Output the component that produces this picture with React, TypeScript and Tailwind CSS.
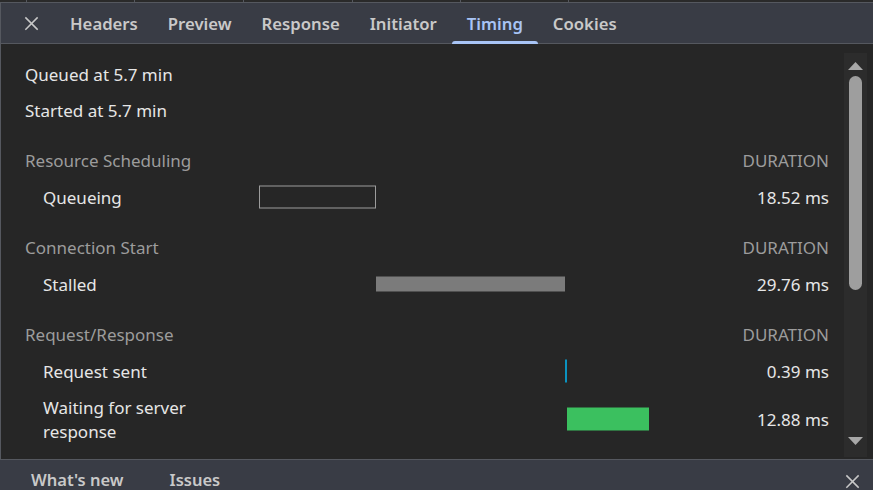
import React from "react";

const font = { fontFamily: '"Noto Sans", "Open Sans", sans-serif' };

function XIcon({ className }: { className?: string }) {
  return (
    <svg className={className} viewBox="0 0 16 16" fill="none" stroke="currentColor" strokeWidth="1.6" strokeLinecap="square">
      <path d="M2 2 L14 14 M14 2 L2 14" />
    </svg>
  );
}

type Bar = { left: number; width: number; h: number; kind: "outline" | "gray" | "blue" | "green" };

function Row({ label, duration, bar, tall }: { label: React.ReactNode; duration: string; bar: Bar; tall?: boolean }) {
  const cls =
    bar.kind === "outline"
      ? "border border-[#9c9c9c]"
      : bar.kind === "gray"
      ? "bg-[#7b7b7b]"
      : bar.kind === "blue"
      ? "bg-[#0b93c0]"
      : "bg-[#3bc05f]";
  return (
    <div className={`flex items-center ${tall ? "h-[60px]" : "h-[37px]"}`}>
      <div className="w-[234px] pl-[18px] leading-[24px] text-[#e6e6e6]">{label}</div>
      <div className="relative flex-1 self-stretch flex items-center">
        <div
          className={`absolute ${cls}`}
          style={{ left: bar.left, width: bar.width, height: bar.h, top: "50%", transform: "translateY(calc(-50% - 1px))" }}
        />
      </div>
      <div className="w-[120px] text-right text-[#e6e6e6]">{duration}</div>
    </div>
  );
}

function Section({ title, children }: { title: string; children: React.ReactNode }) {
  return (
    <div className="mt-[14px]">
      <div className="flex items-center justify-between h-[36px] text-[#9c9c9c]">
        <span>{title}</span>
        <span>DURATION</span>
      </div>
      {children}
    </div>
  );
}

export default function App() {
  const tabs = ["Headers", "Preview", "Response", "Initiator", "Timing", "Cookies"];
  const dividers = [26, 134, 243, 352, 460, 568];
  return (
    <div style={font} className="w-[873px] h-[490px] bg-[#262626] flex flex-col overflow-hidden text-[17px]">
      {/* top strip */}
      <div className="h-[3px] bg-[#2a2a2a] border-b border-[#55585f] relative shrink-0">
        {dividers.map((x) => (
          <div key={x} className="absolute top-0 h-[2px] w-px bg-[#55585f]" style={{ left: x }} />
        ))}
      </div>
      {/* tab bar */}
      <div className="h-[41px] shrink-0 bg-[#393c45] border-b border-l border-[#55585f] flex items-stretch">
        <div className="w-[54px] flex items-center pl-[23px] text-[#c8c8c8]">
          <XIcon className="w-[15px] h-[15px] mt-[1px]" />
        </div>
        <div className="flex items-stretch">
          {tabs.map((t) => {
            const active = t === "Timing";
            return (
              <div key={t} className="relative px-[15px] flex items-center">
                <span className={`font-semibold text-[16.7px] mt-[2px] ${active ? "text-[#a8c4f5]" : "text-[#c9c9c9]"}`}>{t}</span>
                {active && (
                  <div className="absolute left-0 right-0 bottom-[-1px] h-[3px] rounded-t-[3px] bg-[#a8c4f5]" />
                )}
              </div>
            );
          })}
        </div>
      </div>
      {/* content */}
      <div className="flex-1 flex border-l border-[#55585f] min-h-0">
        <div className="flex-1 pl-[24px] pr-[15px] pt-[13px] overflow-hidden">
          <div className="h-[36px] flex items-center text-[#e6e6e6]">Queued at 5.7 min</div>
          <div className="h-[36px] flex items-center text-[#e6e6e6]">Started at 5.7 min</div>
          <Section title="Resource Scheduling">
            <Row label="Queueing" duration="18.52 ms" bar={{ left: 0, width: 117, h: 23, kind: "outline" }} />
          </Section>
          <Section title="Connection Start">
            <Row label="Stalled" duration="29.76 ms" bar={{ left: 117, width: 189, h: 15, kind: "gray" }} />
          </Section>
          <Section title="Request/Response">
            <Row label="Request sent" duration="0.39 ms" bar={{ left: 306, width: 2, h: 23, kind: "blue" }} />
            <Row
              tall
              label={
                <>
                  Waiting for server
                  <br />
                  response
                </>
              }
              duration="12.88 ms"
              bar={{ left: 308, width: 82, h: 23, kind: "green" }}
            />
          </Section>
        </div>
        {/* scrollbar */}
        <div className="w-[29px] pt-[9px] pb-[2px] pr-[6px] flex flex-col">
          <div className="flex-1 bg-[#2c2c2c] flex flex-col items-center">
            <svg width="15" height="8" viewBox="0 0 15 8" className="mt-[9px]">
              <path d="M7.5 0 L15 8 L0 8 Z" fill="#a8a8a8" />
            </svg>
            <div className="mt-[6px] w-[13px] h-[214px] rounded-full bg-[#9e9e9e]" />
            <div className="flex-1" />
            <svg width="15" height="8" viewBox="0 0 15 8" className="mb-[12px]">
              <path d="M0 0 L15 0 L7.5 8 Z" fill="#a8a8a8" />
            </svg>
          </div>
        </div>
      </div>
      {/* bottom bar */}
      <div className="h-[31px] shrink-0 bg-[#393c45] border-t border-[#55585f] flex items-center">
        <span className="ml-[31px] font-semibold text-[16.5px] text-[#c9c9c9] mt-[11px]">What's new</span>
        <span className="ml-[46px] font-semibold text-[16.5px] text-[#c9c9c9] mt-[11px]">Issues</span>
        <div className="flex-1" />
        <XIcon className="w-[15px] h-[15px] mr-[13px] mt-[12px] text-[#c8c8c8]" />
      </div>
    </div>
  );
}
